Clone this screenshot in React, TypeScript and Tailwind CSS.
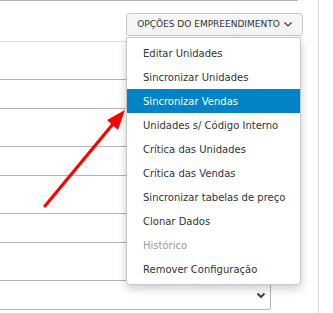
const items = [
  'Editar Unidades',
  'Sincronizar Unidades',
  'Sincronizar Vendas',
  'Unidades s/ Código Interno',
  'Crítica das Unidades',
  'Crítica das Vendas',
  'Sincronizar tabelas de preço',
  'Clonar Dados',
  'Histórico',
  'Remover Configuração',
];

function Field({ select }: { select?: boolean }) {
  return (
    <div className="-ml-[10px] flex h-[30px] w-[281px] items-center justify-end rounded-[3px] border border-[#b3b3b3] bg-white pr-[4px]">
      {select && (
        <svg width="10" height="7" viewBox="0 0 10 7" className="mt-px">
          <path d="M1.5 1.5 L5 5 L8.5 1.5" fill="none" stroke="#444" strokeWidth="2" />
        </svg>
      )}
    </div>
  );
}

export default function App() {
  return (
    <div
      className="relative h-[313px] w-[333px] overflow-hidden bg-white text-[#333]"
      style={{ fontFamily: '"DejaVu Sans", Verdana, sans-serif' }}
    >
      <div className="flex h-full">
        <div className="w-[319px] overflow-hidden border-r border-[#ddd]">
          <div className="h-px w-[298px] bg-[#b0b0b0]" />
          <div className="flex w-[303px] justify-end pt-[12px]">
            <button className="flex h-[23px] w-[177px] items-center justify-center gap-[4px] rounded-[3px] border border-[#c8c8c8] bg-[#f5f5f5] text-[9px] text-[#333]">
              OPÇÕES DO EMPREENDIMENTO
              <svg width="8" height="5" viewBox="0 0 8 5">
                <path d="M0.5 0.5 L4 4 L7.5 0.5" fill="none" stroke="#333" strokeWidth="1.1" />
              </svg>
            </button>
          </div>
          <div className="mt-[5px] h-px w-[298px] bg-[#dcdcdc]" />
          <div className="flex flex-col gap-[37px] pt-[37px]">
            <Field />
            <Field />
            <Field />
            <Field select />
          </div>
        </div>
      </div>

      <div className="absolute left-[126px] top-[37px] w-[175px] rounded-b-[4px] border border-[#c8c8c8] bg-white py-[3px] shadow-[0_4px_10px_rgba(0,0,0,0.2)]">
        {items.map((label) => (
          <div
            key={label}
            className={
              'flex h-[24px] items-center pl-[16px] text-[10px] ' +
              (label === 'Sincronizar Vendas'
                ? 'bg-[#0084c7] text-white'
                : label === 'Histórico'
                  ? 'text-[#999]'
                  : 'text-[#333]')
            }
          >
            {label}
          </div>
        ))}
      </div>

      <svg className="pointer-events-none absolute left-0 top-0" width="333" height="313">
        <line x1="45" y1="206" x2="113" y2="124" stroke="#ff0000" strokeWidth="3.2" strokeLinecap="round" />
        <polygon points="125,110 107,120 118,130" fill="#ff0000" />
      </svg>
    </div>
  );
}
